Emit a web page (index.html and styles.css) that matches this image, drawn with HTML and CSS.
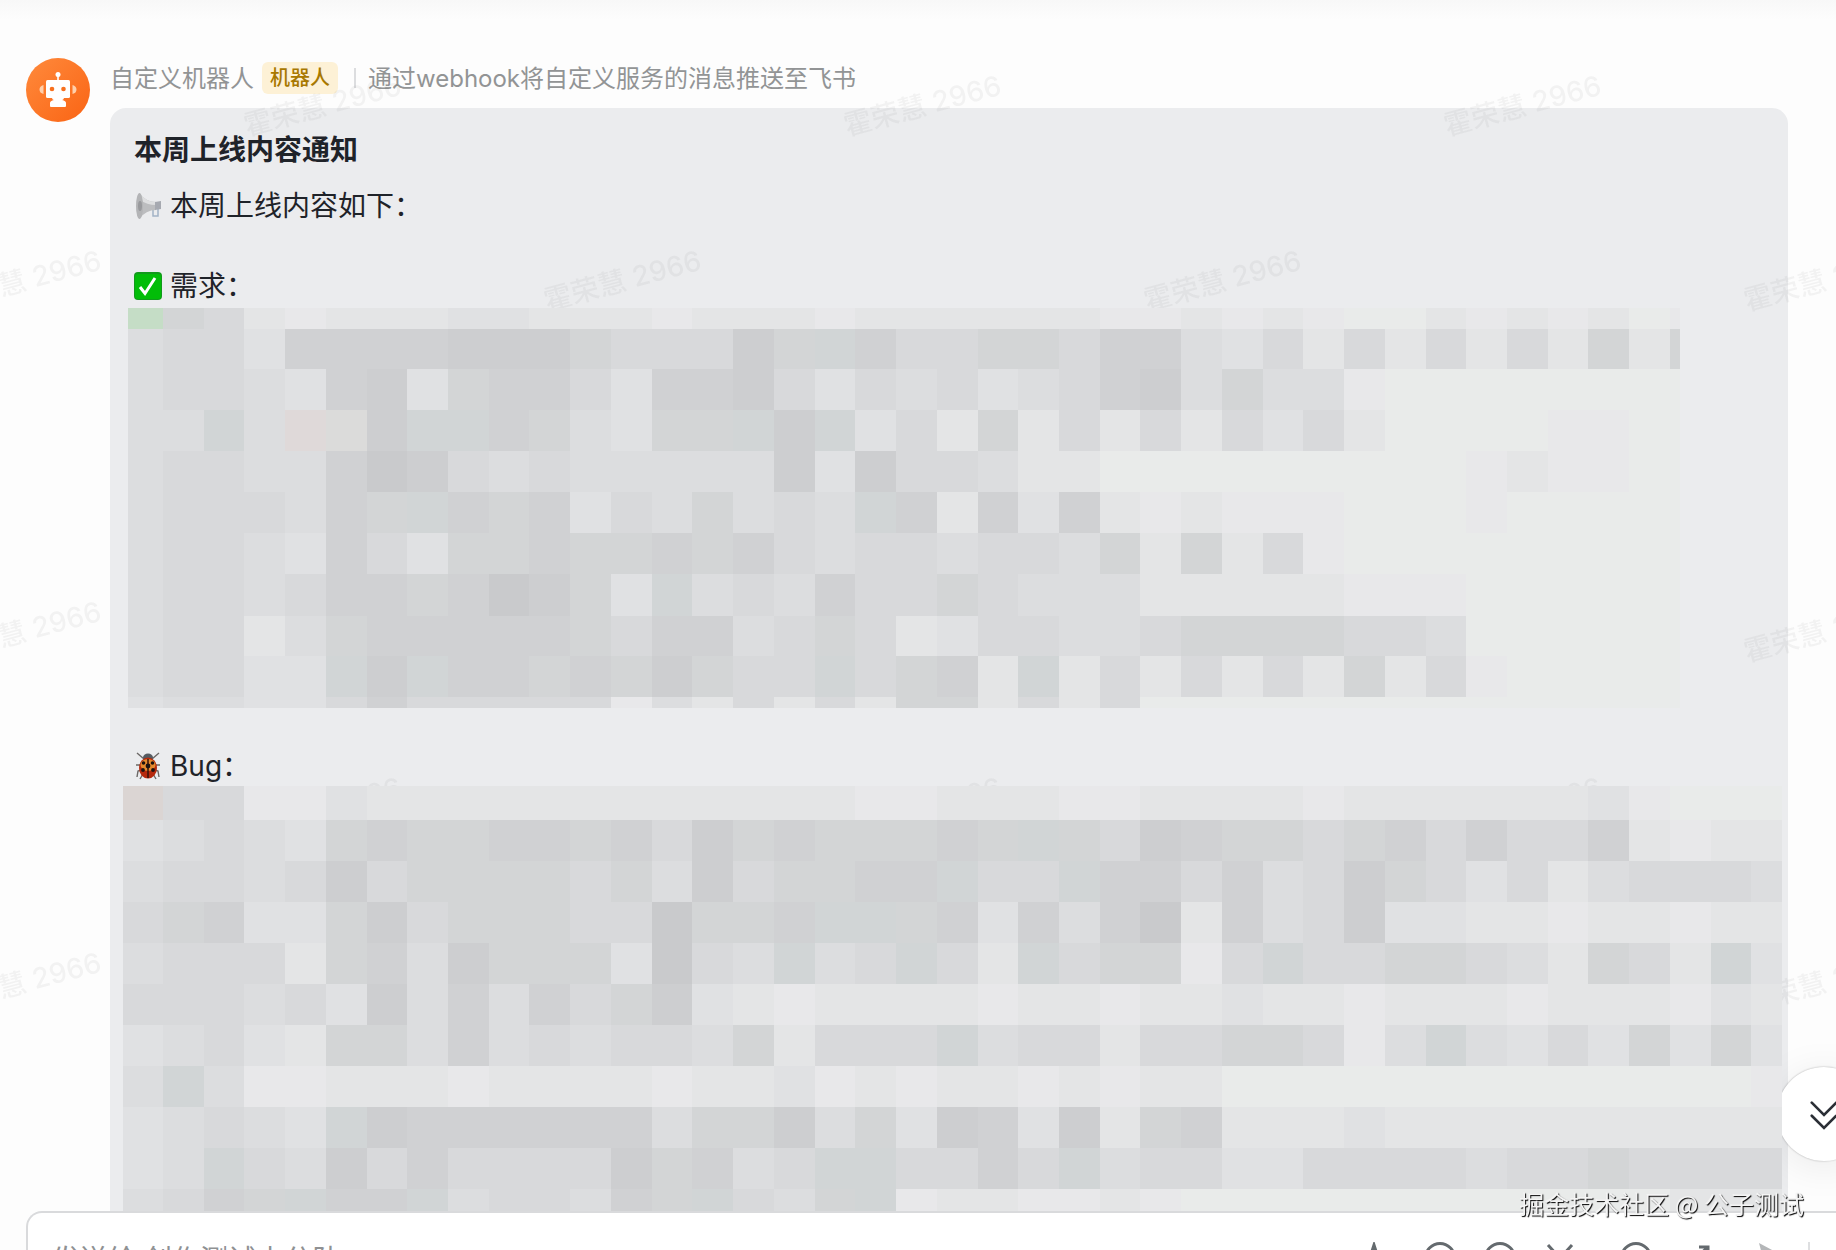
FILE: index.html
```html
<!DOCTYPE html>
<html lang="zh-CN">
<head>
    <meta charset="UTF-8">
    <meta name="viewport" content="width=device-width, initial-scale=1.0">
    <title>自定义机器人</title>
    <link rel="stylesheet" href="styles.css">
</head>
<body>

    <div class="chat">
        <main class="messages">
            <article class="message">
                <svg class="avatar" viewBox="0 0 64 64" aria-hidden="true">
                    <defs>
                        <linearGradient id="avatarBg" x1="0" y1="0" x2="1" y2="1">
                            <stop offset="0" stop-color="#ff8a3c"/>
                            <stop offset="1" stop-color="#fa6414"/>
                        </linearGradient>
                    </defs>
                    <circle cx="32" cy="32" r="32" fill="url(#avatarBg)"/>
                    <path d="M17.500 27q-4 1-4 4.500t4 4.500zM46.500 27q4 1 4 4.500t-4 4.500z" fill="#ffd0ac"/>
                    <circle cx="32" cy="16.500" r="2.500" fill="#fff"/>
                    <path d="M31.200 17h1.600v6h-1.600z" fill="#fff"/>
                    <rect x="20" y="22" width="24" height="18" rx="1.500" fill="#fff"/>
                    <path d="M26 39h12q0 3-2 3 4 1 4 3v3q0 1-1 1H25q-1 0-1-1v-3q0-2 4-3-2 0-2-3z" fill="#fff"/>
                    <circle cx="26" cy="31" r="2.300" fill="#f8701e"/>
                    <circle cx="37.500" cy="31" r="2.300" fill="#f8701e"/>
                </svg>

                <div class="message-body">
                    <header class="message-header">
                        <span class="name">自定义机器人</span>
                        <span class="badge">机器人</span>
                        <span class="description">通过webhook将自定义服务的消息推送至飞书</span>
                    </header>

                    <section class="card">
                        <h1>本周上线内容通知</h1>
                        <p>
                            <svg class="emoji" viewBox="0 0 28 28" aria-hidden="true">
                                <path d="M19 16v8h5V14" fill="none" stroke="#a3b3c6" stroke-width="1.500"/>
                                <path d="M5 1q7 9 17 9v8Q12 18 5 27z" fill="#bcbdbf"/>
                                <path d="M5 1q7 9 17 9v3Q13 13 6 8z" fill="#dedfe0"/>
                                <path d="M21 10l6-1v8l-6 1z" fill="#a6a9b0"/>
                                <ellipse cx="5.500" cy="14" rx="3.500" ry="13" fill="#b3b4b6"/>
                                <ellipse cx="6" cy="14" rx="2" ry="5" fill="#98999c"/>
                            </svg>本周上线内容如下：
                        </p>
                        <p class="spaced">
                            <svg class="emoji" viewBox="0 0 28 28" aria-hidden="true">
                                <rect width="28" height="28" rx="4" fill="#129a1c"/>
                                <rect x="1" y="2" width="26" height="25" rx="3" fill="#02bd08"/>
                                <path d="M6 15l5 6.500L21 6" fill="none" stroke="#fff" stroke-width="3"/>
                            </svg>需求：
                        </p>
                        <svg class="mosaic mosaic-feature" id="featureMosaic" viewBox="128 308 1552 400" aria-hidden="true"></svg>
                        <p class="spaced">
                            <svg class="emoji" viewBox="0 0 28 28" aria-hidden="true">
                                <path d="M10 7L3 1M18 7l7-6M7 13H2M21 13h5M7 18l-3 1-1 6M21 18l3 1 1 6M9 22l-3 5M19 22l3 5" fill="none" stroke="#6c6967" stroke-width="1.400"/>
                                <ellipse cx="14" cy="5.500" rx="5" ry="4" fill="#555b61"/>
                                <ellipse cx="14" cy="16" rx="9" ry="10.500" fill="#b5290d"/>
                                <ellipse cx="14" cy="13" rx="7.500" ry="6" fill="#e58a2e"/>
                                <path d="M14 7v19" stroke="#33110a" stroke-width="1.500"/>
                                <g fill="#1d1210">
                                    <circle cx="9.500" cy="11" r="1.800"/>
                                    <circle cx="18.500" cy="11" r="1.800"/>
                                    <circle cx="14" cy="14" r="2.400"/>
                                    <circle cx="9" cy="18" r="1.900"/>
                                    <circle cx="19" cy="18" r="1.900"/>
                                </g>
                            </svg>Bug：
                        </p>
                        <svg class="mosaic mosaic-bug" id="bugMosaic" viewBox="123 786 1659 426" aria-hidden="true"></svg>
                    </section>
                </div>
            </article>

            <svg class="watermark" aria-hidden="true">
                <defs>
                    <pattern id="userMark" width="600" height="351" patternUnits="userSpaceOnUse">
                        <text transform="translate(247 136) rotate(-15)">霍荣慧 2966</text>
                        <text transform="translate(547 311) rotate(-15)">霍荣慧 2966</text>
                        <text transform="translate(-53 311) rotate(-15)">霍荣慧 2966</text>
                    </pattern>
                </defs>
                <rect width="100%" height="100%" fill="url(#userMark)"/>
            </svg>

            <button type="button" class="scroll-bottom" aria-label="回到底部">
                <svg viewBox="0 0 32 32" aria-hidden="true">
                    <path d="M2 3l14 14L30 3M2 18l14 14 14-14"/>
                </svg>
            </button>
        </main>

        <form class="composer">
            <input type="text" class="composer-input" aria-label="消息" placeholder="发送给 创作测试小分队">
            <div class="tools">
                <button type="button" aria-label="格式">
                    <svg viewBox="0 0 32 32"><path d="M1 31L10 3l9 28M4 22h12"/></svg>
                </button>
                <button type="button" aria-label="表情">
                    <svg viewBox="0 0 32 32"><circle cx="16" cy="16" r="14.500"/><path d="M9 19q7 8 14 0"/></svg>
                </button>
                <button type="button" aria-label="提及">
                    <svg viewBox="0 0 32 32"><circle cx="16" cy="16" r="14.500"/><circle cx="16" cy="16" r="6"/></svg>
                </button>
                <button type="button" aria-label="截图">
                    <svg viewBox="0 0 32 32"><path d="M4 3l19 21M28 3L9 24"/><circle cx="6" cy="27" r="4"/><circle cx="26" cy="27" r="4"/></svg>
                </button>
            </div>
            <div class="tools">
                <button type="button" aria-label="添加">
                    <svg viewBox="0 0 32 32"><circle cx="16" cy="16" r="14.500"/><path d="M16 9v14M9 16h14"/></svg>
                </button>
                <button type="button" aria-label="展开">
                    <svg viewBox="0 0 32 32"><path d="M19 5h9v9M28 5L18 14M13 28H4v-9M4 28l10-10"/></svg>
                </button>
            </div>
            <button type="button" class="send" aria-label="发送">
                <svg viewBox="0 0 32 32"><path d="M3 1l28 15L3 31l4-15z"/></svg>
            </button>
        </form>
    </div>

    <div class="credit">掘金技术社区 @ 公子测试</div>

    <script src="mosaic.js"></script>
</body>
</html>
```

FILE: styles.css
```css
body {
    margin: 0;
    font-family: Inter, "Noto Sans CJK SC", sans-serif;
    color: #1f2329;
    background-color: #fdfdfd;
}

button {
    padding: 0;
    border: none;
    background: none;
    cursor: pointer;
}

.chat {
    display: flex;
    flex-direction: column;
    height: 100vh;
    overflow: hidden;
}

.messages {
    position: relative;
    flex: 1;
    min-height: 0;
    overflow: hidden;
    background: linear-gradient(#f8f8f8, #fdfdfd 20px);
}

.message {
    display: flex;
    gap: 20px;
    padding: 58px 48px 0 26px;
}

.avatar {
    flex: none;
    width: 64px;
    height: 64px;
}

.message-body {
    flex: 1;
    min-width: 0;
    padding-top: 4px;
}

.message-header {
    display: flex;
    align-items: center;
    height: 32px;
    margin-bottom: 14px;
    font-size: 24px;
    line-height: 32px;
    white-space: nowrap;
}

.name,
.description {
    padding-top: 2px;
    color: #929495;
}

.badge {
    margin: 0 16px 0 8px;
    padding: 0 8px;
    border-radius: 6px;
    background-color: #fdf1d6;
    color: #a87800;
    font-size: 20px;
    font-weight: 500;
}

.description::before {
    content: "";
    display: inline-block;
    width: 2px;
    height: 20px;
    margin-right: 12px;
    background-color: #dcdddf;
    vertical-align: -1px;
}

.card {
    padding: 22px 24px;
    border-radius: 16px;
    background-color: #ebecee;
    font-size: 28px;
    line-height: 40px;
}

.card h1 {
    margin: 0 0 16px;
    font-size: 28px;
    font-weight: 600;
    line-height: 40px;
}

.card p {
    display: flex;
    align-items: center;
    gap: 8px;
    height: 40px;
    margin: 0;
}

.card .spaced {
    margin-top: 40px;
}

.emoji {
    width: 28px;
    height: 28px;
}

.mosaic {
    position: relative;
    z-index: 2;
    display: block;
}

.mosaic-feature {
    margin: 2px 84px 0 -6px;
}

.card .mosaic-feature + .spaced {
    margin-top: 38px;
}

.mosaic-bug {
    margin: 0 -18px 0 -11px;
}

.watermark {
    position: absolute;
    top: 0;
    left: 0;
    width: 100%;
    height: 100%;
    pointer-events: none;
}

.watermark text {
    font-size: 28px;
    font-weight: 500;
    fill: #1f2329;
    fill-opacity: 0.05;
}

.scroll-bottom {
    position: absolute;
    right: -35px;
    bottom: 50px;
    z-index: 1;
    display: flex;
    align-items: center;
    justify-content: center;
    width: 94px;
    height: 94px;
    border-radius: 50%;
    background-color: #fff;
    box-shadow: 0 0 2px rgba(0, 0, 0, 0.3), 0 6px 40px rgba(0, 0, 0, 0.08);
}

.scroll-bottom svg {
    width: 28px;
    height: 28px;
    fill: none;
    stroke: #2b2f36;
    stroke-width: 3;
    stroke-linecap: round;
    overflow: visible;
}

/* the lower part of the composer runs below the window */
.composer {
    display: flex;
    flex: none;
    align-items: flex-start;
    gap: 44px;
    box-sizing: border-box;
    height: 100px;
    margin: 0 0 -61px 26px;
    padding: 29px 48px 0 24px;
    border: 2px solid #d9dadc;
    border-right: none;
    border-radius: 16px 0 0 0;
    background-color: #fff;
}

.composer-input {
    flex: 1;
    min-width: 0;
    height: 36px;
    padding: 0;
    border: none;
    outline: none;
    font: inherit;
    font-size: 28px;
}

.composer-input::placeholder {
    color: #8f9193;
    opacity: 1;
}

.tools {
    display: flex;
    gap: 28px;
}

.composer button,
.composer svg {
    display: block;
    width: 32px;
    height: 32px;
}

.composer svg {
    fill: none;
    stroke: #646a6e;
    stroke-width: 3;
}

.composer .send {
    position: relative;
}

.composer .send svg {
    fill: #b4b6b8;
    stroke: none;
}

.send::after {
    content: "";
    position: absolute;
    top: 0;
    left: 52px;
    width: 2px;
    height: 32px;
    background-color: #dedfe1;
}

.credit {
    position: fixed;
    right: 32px;
    bottom: 29px;
    z-index: 3;
    font-family: "Noto Sans CJK SC", sans-serif;
    font-size: 25px;
    line-height: 36px;
    color: #f4f4f4;
    text-shadow: 1px 1px 1px #000;
}
```

FILE: mosaic.js
```js
// a (dark) to j (light) are the greys, capitals are the tinted blocks
const SHADES = {
    a: '#c9cacc', b: '#cdced0', c: '#d0d1d3', d: '#d3d5d6', e: '#d8d9db',
    f: '#dcdddf', g: '#e0e1e3', h: '#e4e5e6', i: '#e8e8ea', j: '#e9ebea',
    T: '#d1d5d6', G: '#c5ddc6', P: '#dfd9d9', W: '#dbdbda', R: '#dbd5d3'
};

const FEATURE_ROWS = [
    'Gdehihhhgghhhihhhihhhhhhiihihijjhihihji',
    'feegccccbbbdeeebdTceeddeccfgehehehehdhd',
    'feefgcbgdccegccbegefegfecbfdffijjjjjjjj',
    'ffTfPWbTTcdfgddTbTgehdhehehegehjjjjiijj',
    'feeffcabefefffffbgbeefhhjjjjjjjjjihiijj',
    'feeefcdTcdcgefdfefTchcgchihiiijjjijjjjj',
    'feefgcegddcddcdcefeefeefdhdheijjjjjjjjj',
    'feefeccdcabdgTfefceedefffhhhhhiiijjjjjj',
    'feehfdcccccdeccfedehgeeffeddddeefjjjjjj',
    'feeggTbTccdcdbdeeTedchThehehehdheijjjjj',
    'gffggeceeeeeifhehehddhehejjjjjjjjjjjjjj'
];

const BUG_ROWS = [
    'Reeiighhhhhhhhhhhhiihhhiihhhhihhhhhhgijjj',
    'gfefgdcddccdcebdcdddcdTdebcddedceceechihh',
    'feefebeddddedfbeddccTeeTccecfebdegehfeeef',
    'edcggdbedddeeaddcTTdcgcfcahcfebgghhihhihh',
    'feeehdcfbdddgaefTfeTehTeddieTeeddefhdehTg',
    'eeefegbfcfcedbghihhhhihhihhghhihhhihhhigh',
    'gfeghddfcfefeefdheeeTfeeheeddeifTfgegdgdg',
    'fTfiihhhihhhhihhgihihhihihhjjjjjjjjjjjjji',
    'gfefgTbccccccfddbfdgbcgbhdchhhghhhhhhhhhh',
    'gfTefbeceeeebdcfeTTeeceTfeeggeeeefeedeeee',
    'fecdTccTfeefcdTefdTihhiihijjjjjjjjjjjjhhh'
];

const CELL = 40.73;

function drawMosaic(id, rows, rowEdges) {
    const svg = document.getElementById(id);
    const box = svg.viewBox.baseVal;
    const right = box.x + box.width;

    rows.forEach((row, r) => {
        for (let c = 0; c < row.length; c++) {
            const x1 = c === 0 ? box.x : Math.round((c + 3) * CELL);
            const x2 = Math.min(Math.round((c + 4) * CELL), right);
            const rect = document.createElementNS('http://www.w3.org/2000/svg', 'rect');
            rect.setAttribute('x', x1);
            rect.setAttribute('y', rowEdges[r]);
            rect.setAttribute('width', x2 - x1);
            rect.setAttribute('height', rowEdges[r + 1] - rowEdges[r]);
            rect.setAttribute('fill', SHADES[row[c]]);
            rect.setAttribute('shape-rendering', 'crispEdges');
            svg.appendChild(rect);
        }
    });
}

drawMosaic('featureMosaic', FEATURE_ROWS, [308, 329, 369, 410, 451, 492, 533, 574, 616, 656, 697, 708]);
drawMosaic('bugMosaic', BUG_ROWS, [786, 820, 861, 902, 943, 984, 1025, 1066, 1107, 1148, 1189, 1212]);
```
